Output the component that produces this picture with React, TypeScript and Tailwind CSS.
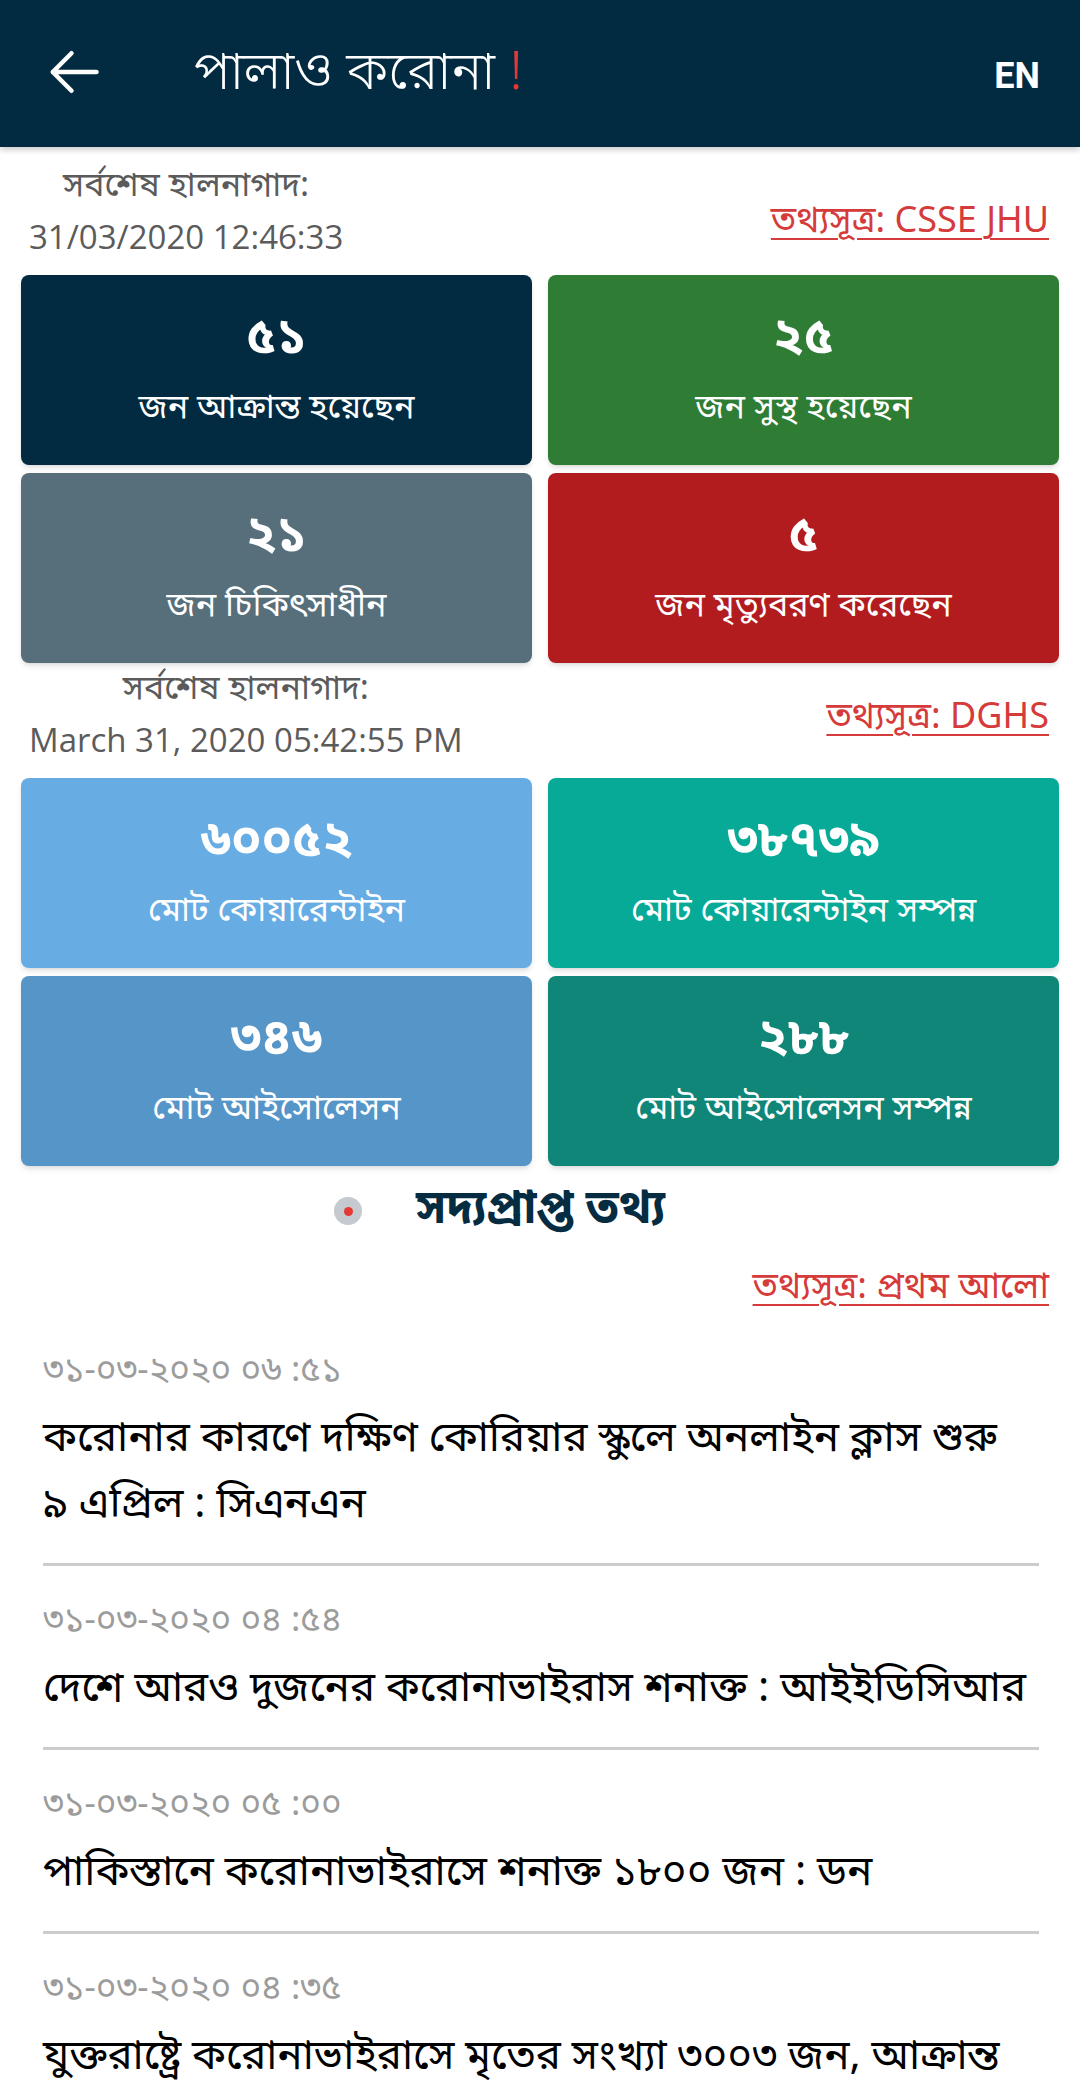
const bn = "font-['Noto_Sans_Bengali','Noto_Sans','Lohit_Bengali','FreeSans',sans-serif]";

type Stat = { value: string; label: string; color: string };

const jhu: Stat[] = [
  { value: "৫১", label: "জন আক্রান্ত হয়েছেন", color: "bg-[#022b41]" },
  { value: "২৫", label: "জন সুস্থ হয়েছেন", color: "bg-[#2f7d35]" },
  { value: "২১", label: "জন চিকিৎসাধীন", color: "bg-[#566f7b]" },
  { value: "৫", label: "জন মৃত্যুবরণ করেছেন", color: "bg-[#b31c1e]" },
];

const dghs: Stat[] = [
  { value: "৬০০৫২", label: "মোট কোয়ারেন্টাইন", color: "bg-[#67ace3]" },
  { value: "৩৮৭৩৯", label: "মোট কোয়ারেন্টাইন সম্পন্ন", color: "bg-[#06aa97]" },
  { value: "৩৪৬", label: "মোট আইসোলেসন", color: "bg-[#5595c8]" },
  { value: "২৮৮", label: "মোট আইসোলেসন সম্পন্ন", color: "bg-[#0f8677]" },
];

const news = [
  { time: "৩১-০৩-২০২০ ০৬ :৫১", title: "করোনার কারণে দক্ষিণ কোরিয়ার স্কুলে অনলাইন ক্লাস শুরু\n৯ এপ্রিল : সিএনএন" },
  { time: "৩১-০৩-২০২০ ০৪ :৫৪", title: "দেশে আরও দুজনের করোনাভাইরাস শনাক্ত : আইইডিসিআর" },
  { time: "৩১-০৩-২০২০ ০৫ :০০", title: "পাকিস্তানে করোনাভাইরাসে শনাক্ত ১৮০০ জন : ডন" },
  { time: "৩১-০৩-২০২০ ০৪ :৩৫", title: "যুক্তরাষ্ট্রে করোনাভাইরাসে মৃতের সংখ্যা ৩০০৩ জন, আক্রান্ত\n১ লাখ ৬৪ হাজার ছাড়িয়েছে" },
];

function StatGrid({ items }: { items: Stat[] }) {
  return (
    <div className="grid grid-cols-2 gap-x-4 gap-y-2">
      {items.map((s) => (
        <div key={s.label} className={`${s.color} h-[190px] rounded-lg shadow-md flex flex-col items-center text-white ${bn}`}>
          <div className="mt-[37px] text-[50px] leading-[56px] font-bold">{s.value}</div>
          <div className="mt-[20px] text-[34px] leading-[44px]">{s.label}</div>
        </div>
      ))}
    </div>
  );
}

function UpdateRow({ date, source, row, link }: { date: string; source: string; row: string; link: string }) {
  return (
    <div className={`flex items-start justify-between pl-2 pr-[10px] ${row}`}>
      <div className="flex flex-col items-center text-[#5b5b5b]">
        <span className={`${bn} text-[34px] leading-[48px]`}>সর্বশেষ হালনাগাদ:</span>
        <span className="font-['Open_Sans',sans-serif] text-[33px] leading-[50px]">{date}</span>
      </div>
      <a href="#" className={`${bn} ${link} text-[36px] leading-[44px] text-[#d63b3b] underline decoration-2 underline-offset-[6px]`}>
        {source}
      </a>
    </div>
  );
}

export default function App() {
  return (
    <div className="w-[1080px] h-[2097px] bg-white overflow-hidden">
      <header className="relative z-10 h-[147px] bg-[#022b41] flex items-center px-[40px] shadow-[0_3px_6px_rgba(0,0,0,0.2)]">
        <svg width="60" height="60" viewBox="0 0 24 24" fill="none" stroke="white" strokeWidth="1.8" strokeLinecap="round" strokeLinejoin="round" className="ml-[4px] -mt-1">
          <path d="M21 12H3.5M11 4.5 3.5 12l7.5 7.5" />
        </svg>
        <h1 className={`${bn} ml-[90px] mt-1 text-[53px] font-light text-white`}>
          পালাও করোনা <span className="text-[#e53935]">!</span>
        </h1>
        <span className="ml-auto mt-1 font-['Roboto',sans-serif] font-bold text-[36px] text-white">EN</span>
      </header>

      <main className="px-[21px]">
        <UpdateRow date="31/03/2020 12:46:33" source="তথ্যসূত্র: CSSE JHU" row="h-[128px] pt-[17px]" link="mt-[37px]" />
        <StatGrid items={jhu} />
        <UpdateRow date="March 31, 2020 05:42:55 PM" source="তথ্যসূত্র: DGHS" row="h-[115px] pt-[4px]" link="mt-[30px]" />
        <StatGrid items={dghs} />

        <div className="h-[90px] flex items-center gap-[54px] pl-[313px]">
          <div className="w-[28px] h-[28px] rounded-full bg-[#c5cad0] flex items-center justify-center">
            <div className="w-[9px] h-[9px] rounded-full bg-[#e53935]" />
          </div>
          <h2 className={`${bn} text-[47px] leading-[56px] font-bold text-[#062c42]`}>সদ্যপ্রাপ্ত তথ্য</h2>
        </div>
        <div className="flex justify-end pr-[10px] mt-[11px]">
          <a href="#" className={`${bn} text-[36px] leading-[44px] text-[#d63b3b] underline decoration-2 underline-offset-[6px]`}>
            তথ্যসূত্র: প্রথম আলো
          </a>
        </div>

        <ul className="pl-[22px] pr-[20px] mt-[5px]">
          {news.map((n) => (
            <li key={n.time} className="border-b-[3px] border-[#cccccc] pt-[36px] pb-[24px]">
              <div className={`${bn} text-[35px] text-[#9c9c9c] leading-[40px]`}>{n.time}</div>
              <p className={`${bn} mt-[15px] text-[42px] text-black leading-[66px] whitespace-pre-line`}>{n.title}</p>
            </li>
          ))}
        </ul>
      </main>
    </div>
  );
}
